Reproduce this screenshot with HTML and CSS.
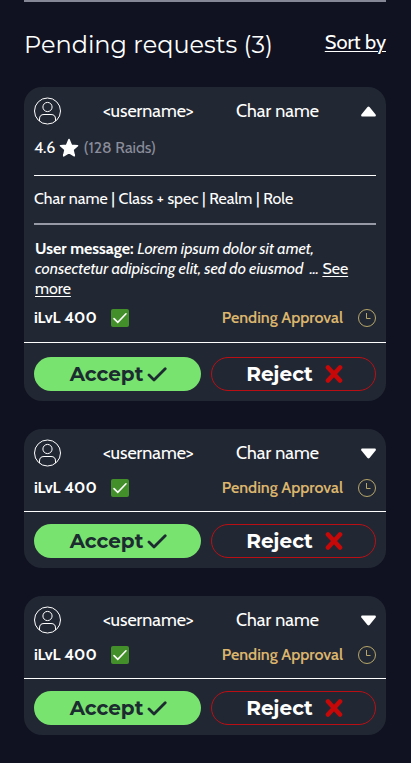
FILE: index.html
```html
<!DOCTYPE html>
<html lang="en">
<head>
    <meta charset="UTF-8">
    <meta name="viewport" content="width=device-width, initial-scale=1.0">
    <title>Pending requests</title>
    <link rel="stylesheet" href="styles.css">
</head>
<body>

    <!-- Shared icons -->
    <svg class="sprite" aria-hidden="true">
        <symbol id="icon-user" viewBox="0 0 27 27">
            <g fill="none" stroke="currentColor">
                <circle cx="13.5" cy="13.5" r="13"/>
                <circle cx="13.5" cy="9.5" r="4.6"/>
                <path d="M5.5 23.5V21.5Q5.5 17 10 17H17Q21.5 17 21.5 21.5V23.5"/>
            </g>
        </symbol>
        <symbol id="icon-tick" viewBox="0 0 18 18">
            <rect width="18" height="18" rx="2" fill="#43902a"/>
            <path d="M3 9.6L6.8 13.4L15 4.8" fill="none" stroke="#fff" stroke-width="1.6" stroke-linecap="round"/>
        </symbol>
        <symbol id="icon-clock" viewBox="0 0 18 18">
            <g fill="none" stroke="currentColor">
                <circle cx="9" cy="9" r="8.5"/>
                <path d="M8.5 4V9.5H12.5"/>
            </g>
        </symbol>
        <symbol id="icon-check" viewBox="0 0 20 16">
            <path d="M2 9L7 14L18.2 2.8" fill="none" stroke="currentColor" stroke-width="2.8" stroke-linecap="round" stroke-linejoin="round"/>
        </symbol>
        <symbol id="icon-cross" viewBox="0 0 18 18">
            <path d="M3 2.5L15 15.5M15 2.5L3 15.5" stroke="currentColor" stroke-width="4.6" stroke-linecap="round"/>
        </symbol>
        <symbol id="icon-arrow" viewBox="0 0 15 11">
            <path d="M6.5 .9Q7.5 0 8.5 .9L14.6 8.5Q15.4 10.2 13.8 10.4H1.2Q-.4 10.2 .4 8.5Z" fill="currentColor"/>
        </symbol>
        <symbol id="icon-star" viewBox="0 0 20 20">
            <path d="M10 1.5L12.4 7.2L18.5 7.7L13.9 11.7L15.3 17.8L10 14.6L4.7 17.8L6.1 11.7L1.5 7.7L7.6 7.2Z" fill="currentColor" stroke="currentColor" stroke-width="1.6" stroke-linejoin="round"/>
        </symbol>
    </svg>

    <main>
        <!-- Page heading -->
        <header class="page-header">
            <h1>Pending requests (3)</h1>
            <a href="#sort">Sort by</a>
        </header>

        <div class="requests">
            <!-- Expanded request -->
            <article class="card open">
                <div class="card-head">
                    <svg class="avatar"><use href="#icon-user"/></svg>
                    <span>&lt;username&gt;</span>
                    <span>Char name</span>
                    <button class="toggle" type="button" aria-expanded="true" aria-label="Hide details"><svg><use href="#icon-arrow"/></svg></button>
                </div>
                <div class="details">
                    <p class="rating">4.6 <svg><use href="#icon-star"/></svg> <span>(128 Raids)</span></p>
                    <p class="spec">Char name | Class + spec | Realm | Role</p>
                    <p class="message"><b>User message:</b> <i>Lorem ipsum dolor sit amet, consectetur adipiscing elit, sed do eiusmod&nbsp; ...</i> <a href="#message">See more</a></p>
                </div>
                <div class="status">
                    <b>iLvL 400</b>
                    <svg><use href="#icon-tick"/></svg>
                    <span class="pending">Pending Approval</span>
                    <svg class="clock"><use href="#icon-clock"/></svg>
                </div>
                <div class="actions">
                    <button class="accept" type="button">Accept<svg><use href="#icon-check"/></svg></button>
                    <button class="reject" type="button">Reject<svg><use href="#icon-cross"/></svg></button>
                </div>
            </article>

            <!-- Collapsed requests -->
            <article class="card">
                <div class="card-head">
                    <svg class="avatar"><use href="#icon-user"/></svg>
                    <span>&lt;username&gt;</span>
                    <span>Char name</span>
                    <button class="toggle" type="button" aria-expanded="false" aria-label="Show details"><svg><use href="#icon-arrow"/></svg></button>
                </div>
                <div class="status">
                    <b>iLvL 400</b>
                    <svg><use href="#icon-tick"/></svg>
                    <span class="pending">Pending Approval</span>
                    <svg class="clock"><use href="#icon-clock"/></svg>
                </div>
                <div class="actions">
                    <button class="accept" type="button">Accept<svg><use href="#icon-check"/></svg></button>
                    <button class="reject" type="button">Reject<svg><use href="#icon-cross"/></svg></button>
                </div>
            </article>

            <article class="card">
                <div class="card-head">
                    <svg class="avatar"><use href="#icon-user"/></svg>
                    <span>&lt;username&gt;</span>
                    <span>Char name</span>
                    <button class="toggle" type="button" aria-expanded="false" aria-label="Show details"><svg><use href="#icon-arrow"/></svg></button>
                </div>
                <div class="status">
                    <b>iLvL 400</b>
                    <svg><use href="#icon-tick"/></svg>
                    <span class="pending">Pending Approval</span>
                    <svg class="clock"><use href="#icon-clock"/></svg>
                </div>
                <div class="actions">
                    <button class="accept" type="button">Accept<svg><use href="#icon-check"/></svg></button>
                    <button class="reject" type="button">Reject<svg><use href="#icon-cross"/></svg></button>
                </div>
            </article>
        </div>
    </main>

</body>
</html>
```
FILE: styles.css
```css
* {
    box-sizing: border-box;
}

body {
    margin: 0;
    background-color: #101221;
    color: #fff;
    font-family: Cabin, Lato, sans-serif;
    font-size: 16px;
    line-height: 20px;
}

p,
h1 {
    margin: 0;
}

a {
    color: inherit;
    text-underline-offset: 2px;
    text-decoration-thickness: 1px;
}

svg {
    display: block;
    flex: none;
}

.sprite {
    display: none;
}

main {
    padding: 0 25px 28px 24px;
}

/* Page heading */
.page-header {
    display: flex;
    justify-content: space-between;
    align-items: flex-start;
    height: 87px;
    padding-top: 28px;
    border-top: 2px solid #858796;
}

.page-header h1 {
    font-family: Montserrat, Inter, sans-serif;
    font-size: 24px;
    font-weight: 400;
    line-height: 30px;
}

.page-header a {
    font-size: 20px;
    line-height: 24px;
}

/* Request cards */
.requests {
    display: grid;
    gap: 28px;
}

.card {
    padding: 10px 0;
    border-radius: 18px;
    background-color: #222833;
}

.card-head {
    display: grid;
    grid-template-columns: 69fr 133fr 125fr 15px;
    align-items: center;
    padding: 0 10px;
    font-size: 18px;
}

.avatar {
    width: 27px;
    height: 28px;
}

.toggle {
    padding: 0;
    border: 0;
    background: none;
    color: inherit;
    cursor: pointer;
}

.toggle svg {
    width: 15px;
    height: 11px;
}

.toggle[aria-expanded="false"] svg {
    transform: rotate(180deg);
}

/* Expanded details */
.details {
    padding: 13px 10px 0;
}

.rating {
    display: flex;
    align-items: center;
    gap: 4px;
    padding-bottom: 17px;
    border-bottom: 1px solid #fff;
}

.rating svg {
    width: 20px;
    height: 20px;
}

.rating span {
    color: #8a8d9b;
}

.spec {
    padding: 13px 0 14px;
    border-bottom: 2px solid #9799a6;
}

.message {
    padding: 14px 24px 0 1px;
}

/* Item level and approval state */
.status {
    display: flex;
    align-items: center;
    padding: 11px 10px 13px;
    border-bottom: 1px solid #fff;
}

.status svg {
    width: 18px;
    height: 18px;
    margin-left: 14px;
}

.pending {
    margin-left: auto;
    color: #dcb56d;
    font-weight: 600;
}

.status .clock {
    margin-left: 15px;
    color: #b7a66a;
}

.open .status {
    padding: 9px 10px 14px;
}

/* Accept and reject buttons */
.actions {
    display: grid;
    grid-template-columns: 167fr 165fr;
    gap: 10px;
    padding: 12px 10px 0;
}

.open .actions {
    padding-top: 14px;
}

.actions button {
    display: flex;
    justify-content: center;
    align-items: center;
    height: 34px;
    padding: 0 0 0 2px;
    border: 0;
    border-radius: 17px;
    font-family: Montserrat, Inter, sans-serif;
    font-size: 20px;
    font-weight: 700;
    cursor: pointer;
}

.actions .accept {
    gap: 4px;
    background-color: #78e36e;
    color: #1c2b30;
}

.accept svg {
    width: 20px;
    height: 16px;
}

.actions .reject {
    gap: 12px;
    border: 1px solid #b90f14;
    background: none;
    color: #fff;
}

.reject svg {
    width: 18px;
    height: 18px;
    color: #c70808;
}
```
